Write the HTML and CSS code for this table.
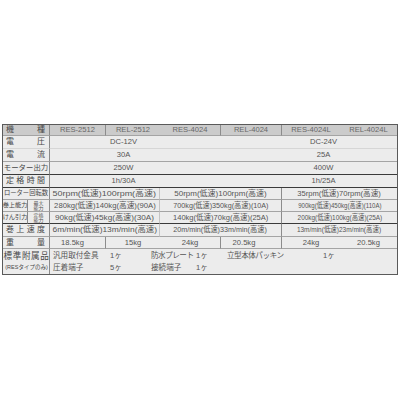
FILE: index.html
```html
<!DOCTYPE html>
<html lang="ja">
<head>
<meta charset="utf-8">
<title>仕様表</title>
<link rel="stylesheet" href="styles.css">
</head>
<body>
<div class="spec">
  <!-- header -->
  <div class="c lab hd just"><span>機</span><span>種</span></div>
  <div class="c hd br">RES-2512</div>
  <div class="c hd">REL-2512</div>
  <div class="c hd br">RES-4024</div>
  <div class="c hd br">REL-4024</div>
  <div class="c hd">RES-4024L</div>
  <div class="c hd">REL-4024L</div>

  <!-- 電圧 -->
  <div class="c lab just nb"><span>電</span><span>圧</span></div>
  <div class="c full nb"><span>DC-12V</span><span></span><span>DC-24V</span></div>

  <!-- 電流 -->
  <div class="c lab just"><span>電</span><span>流</span></div>
  <div class="c full"><span>30A</span><span></span><span>25A</span></div>

  <!-- モーター出力 -->
  <div class="c lab dk small">モーター出力</div>
  <div class="c full dk"><span>250W</span><span></span><span>400W</span></div>

  <!-- 定格時間 -->
  <div class="c lab just dk"><span>定</span><span>格</span><span>時</span><span>間</span></div>
  <div class="c full dk"><span>1h/30A</span><span></span><span>1h/25A</span></div>

  <!-- ローター回転数 -->
  <div class="c lab tiny">ローター回転数</div>
  <div class="c s2 bl"><span class="t k112">50rpm(低速)100rpm(高速)</span></div>
  <div class="c s2 br"><span class="t k100">50rpm(低速)100rpm(高速)</span></div>
  <div class="c s2"><span class="t k95">35rpm(低速)70rpm(高速)</span></div>

  <!-- 巻上能力 -->
  <div class="c sidea">巻上能力</div>
  <div class="c sideb"><span>最大</span><span>能力</span></div>
  <div class="c s2 bl"><span class="t k96">280kg(低速)140kg(高速)(90A)</span></div>
  <div class="c s2 br"><span class="t k90">700kg(低速)350kg(高速)(10A)</span></div>
  <div class="c s2"><span class="t k76">900kg(低速)450kg(高速)(110A)</span></div>

  <!-- けん引力 -->
  <div class="c sidea dk">けん引力</div>
  <div class="c sideb dk"><span>定格</span><span>能力</span></div>
  <div class="c s2 bl dk"><span class="t k102">90kg(低速)45kg(高速)(30A)</span></div>
  <div class="c s2 br dk"><span class="t k94">140kg(低速)70kg(高速)(25A)</span></div>
  <div class="c s2 dk"><span class="t k80">200kg(低速)100kg(高速)(25A)</span></div>

  <!-- 巻上速度 -->
  <div class="c lab just"><span>巻</span><span>上</span><span>速</span><span>度</span></div>
  <div class="c s2 bl"><span class="t k105">6m/min(低速)13m/min(高速)</span></div>
  <div class="c s2 br"><span class="t k90">20m/min(低速)33m/min(高速)</span></div>
  <div class="c s2"><span class="t k81">13m/min(低速)23m/min(高速)</span></div>

  <!-- 重量 -->
  <div class="c lab just"><span>重</span><span>量</span></div>
  <div class="c br wt1">18.5kg</div>
  <div class="c">15kg</div>
  <div class="c br">24kg</div>
  <div class="c br wt4">20.5kg</div>
  <div class="c">24kg</div>
  <div class="c">20.5kg</div>

  <!-- 標準附属品 -->
  <div class="c lab acc-lab last"><span class="acc-l1">標準附属品</span><span class="acc-l2">(RESタイプのみ)</span></div>
  <div class="c acc last">
    <span>汎用取付金具</span><span>1ヶ</span><span class="nar">防水プレート</span><span>1ヶ</span><span class="nar">立型本体パッキン</span><span>1ヶ</span>
    <span>圧着端子</span><span>5ヶ</span><span>接続端子</span><span>1ヶ</span><span></span><span></span>
  </div>
</div>
</body>
</html>
```

FILE: styles.css
```css
* {
  box-sizing: border-box;
}

html,
body {
  margin: 0;
  background: #ffffff;
}

body {
  font-family: "Liberation Sans", "Noto Sans CJK JP", sans-serif;
  color: #555555;
}

.spec {
  margin: 124px 0 0 2px;
  width: 396px;
  height: 151px;
  border: 1px solid #5a5a5a;
  background: #ececec;
  display: grid;
  grid-template-columns: 25px 22px 56px 54px 61px 61px 58px 1fr;
  grid-template-rows: 11px 13px 13px 13px 13px 12px 12px 12px 13px 12px 1fr;
  font-size: 7.6px;
  line-height: 1;
}

.c {
  display: flex;
  align-items: center;
  justify-content: center;
  border-bottom: 1px solid #a4a4a4;
  white-space: nowrap;
}

.hd {
  background: #cbcbcb;
  color: #686868;
  font-size: 7.6px;
}

.lab {
  grid-column: span 2;
  border-right: 1px solid #8a8a8a;
  color: #484848;
  font-size: 8px;
}

.just {
  justify-content: space-between;
  padding: 0 4px 0 3px;
}

.small {
  font-size: 7.4px;
}

.tiny {
  font-size: 6.3px;
}

.br {
  border-right: 1px solid #8c8c8c;
}

.bl {
  border-right: 1px solid #c4c4c4;
}

.dk {
  border-bottom-color: #3a3a3a;
}

.nb {
  border-bottom-color: #d6d6d6;
}

.last {
  border-bottom: none;
}

.full {
  grid-column: 3 / -1;
  display: grid;
  grid-template-columns: 72px 128px 72px;
  justify-items: center;
  align-items: center;
}

.s2 {
  grid-column: span 2;
}

.t {
  display: inline-block;
  font-size: 8px;
  transform-origin: center;
}

.k112 { transform: scaleX(1.12); }
.k105 { transform: scaleX(1.05); }
.k102 { transform: scaleX(1.02); }
.k100 { transform: scaleX(1); }
.k96 { transform: scaleX(0.96); }
.k95 { transform: scaleX(0.95); }
.k94 { transform: scaleX(0.94); }
.k90 { transform: scaleX(0.9); }
.k81 { transform: scaleX(0.81); }
.k80 { transform: scaleX(0.8); }
.k76 { transform: scaleX(0.76); }

.sidea {
  border-right: 1px solid #8a8a8a;
  font-size: 6.2px;
  color: #484848;
}

.sideb {
  border-right: 1px solid #8a8a8a;
  flex-direction: column;
  justify-content: center;
  font-size: 5px;
  line-height: 5px;
  color: #555555;
}

.wt1 {
  padding-right: 10px;
}

.wt4 {
  padding-right: 14px;
}

.acc-lab {
  flex-direction: column;
  justify-content: center;
  gap: 4px;
  padding-left: 1px;
}

.acc-l1 {
  font-size: 8.6px;
  letter-spacing: 0.6px;
}

.acc-l2 {
  font-size: 5.5px;
}

.acc {
  grid-column: 3 / -1;
  display: grid;
  grid-template-columns: 57px 41px 45px 31px 96px 1fr;
  grid-template-rows: 12px 12px;
  align-content: center;
  align-items: center;
  justify-items: start;
  padding-left: 3px;
  font-size: 7.6px;
}

.nar {
  letter-spacing: -0.5px;
}
```
